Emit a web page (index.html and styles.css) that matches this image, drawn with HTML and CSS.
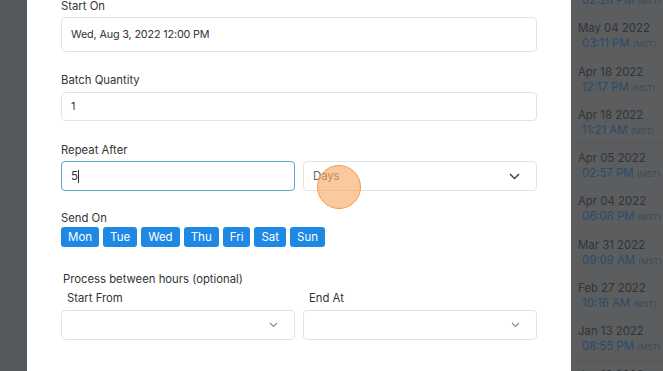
FILE: index.html
```html
<!DOCTYPE html>
<html lang="en">
  <head>
    <meta charset="UTF-8" />
    <meta name="viewport" content="width=device-width, initial-scale=1.0" />
    <link rel="stylesheet" href="styles.css">
  </head>
  <body>
    <div class="page">
      <div class="side-left"></div>

      <div class="modal">
        <label class="field-label first">Start On</label>
        <div class="input tall">Wed, Aug 3, 2022 12:00 PM</div>

        <label class="field-label batch">Batch Quantity</label>
        <div class="input short">1</div>

        <label class="field-label repeat">Repeat After</label>
        <div class="pair">
          <div class="input focused">5<span class="caret"></span></div>
          <div class="input select placeholder">
            Days
            <svg width="11" height="7" viewBox="0 0 11 7"><path d="M1 1l4.5 4.5L10 1" fill="none" stroke="#444" stroke-width="1.5"/></svg>
          </div>
        </div>

        <label class="field-label send">Send On</label>
        <div class="days">
          <span class="day">Mon</span>
          <span class="day">Tue</span>
          <span class="day">Wed</span>
          <span class="day">Thu</span>
          <span class="day">Fri</span>
          <span class="day">Sat</span>
          <span class="day">Sun</span>
        </div>

        <div class="hours-title">Process between hours (optional)</div>
        <div class="pair">
          <div>
            <div class="sub-label">Start From</div>
            <div class="input select">
              <span></span>
              <svg width="9" height="6" viewBox="0 0 9 6"><path d="M1 1l3.5 3.5L8 1" fill="none" stroke="#8a8a8a" stroke-width="1.2"/></svg>
            </div>
          </div>
          <div>
            <div class="sub-label">End At</div>
            <div class="input select">
              <span></span>
              <svg width="9" height="6" viewBox="0 0 9 6"><path d="M1 1l3.5 3.5L8 1" fill="none" stroke="#8a8a8a" stroke-width="1.2"/></svg>
            </div>
          </div>
        </div>

        <div class="click-dot"></div>
      </div>

      <div class="side-right">
        <div class="runs">
          <div class="run"><div class="run-date">May 11 2022</div><div class="run-time">02:28 PM <small>(MST)</small></div></div>
          <div class="run"><div class="run-date">May 04 2022</div><div class="run-time">03:11 PM <small>(MST)</small></div></div>
          <div class="run"><div class="run-date">Apr 18 2022</div><div class="run-time">12:17 PM <small>(MST)</small></div></div>
          <div class="run"><div class="run-date">Apr 18 2022</div><div class="run-time">11:21 AM <small>(MST)</small></div></div>
          <div class="run"><div class="run-date">Apr 05 2022</div><div class="run-time">02:57 PM <small>(MST)</small></div></div>
          <div class="run"><div class="run-date">Apr 04 2022</div><div class="run-time">06:08 PM <small>(MST)</small></div></div>
          <div class="run"><div class="run-date">Mar 31 2022</div><div class="run-time">09:09 AM <small>(MST)</small></div></div>
          <div class="run"><div class="run-date">Feb 27 2022</div><div class="run-time">10:16 AM <small>(MST)</small></div></div>
          <div class="run"><div class="run-date">Jan 13 2022</div><div class="run-time">08:55 PM <small>(MST)</small></div></div>
          <div class="run"><div class="run-date">Jan 12 2022</div><div class="run-time">04:40 PM <small>(MST)</small></div></div>
        </div>
      </div>
    </div>
  </body>
</html>
```

FILE: styles.css
```css
html, body {
  margin: 0;
  height: 100%;
  overflow: hidden;
}
body {
  font-family: Inter, "Noto Sans", sans-serif;
  color: #333;
}
.page {
  display: flex;
  height: 371px;
}
.side-left {
  width: 27px;
  background-color: #55595c;
}
.modal {
  position: relative;
  width: 476px;
  padding: 0 34px;
  background-color: #fff;
}
.field-label {
  display: block;
  font-size: 11.3px;
  line-height: 16px;
}
.field-label.first {
  line-height: 12px;
  margin: 0 0 5px;
}
.field-label.batch {
  margin: 20px 0 4px;
}
.field-label.repeat {
  margin: 21px 0 3px;
}
.field-label.send {
  margin: 19px 0 1px;
}
.input {
  box-sizing: border-box;
  height: 30px;
  padding: 0 9px;
  border: 1px solid #e3e3e3;
  border-radius: 4px;
  font-size: 10.8px;
  letter-spacing: -0.15px;
  display: flex;
  align-items: center;
}
.input.tall {
  height: 35px;
}
.input.short {
  height: 29px;
}
.input.focused {
  border: 1.5px solid #5aa5d8;
  font-size: 11.5px;
}
.caret {
  display: inline-block;
  width: 1px;
  height: 13px;
  background-color: #333;
}
.pair {
  display: grid;
  grid-template-columns: 1fr 1fr;
  gap: 8px;
}
.select {
  justify-content: space-between;
  padding-right: 16px;
}
.placeholder {
  color: #666;
  font-size: 11.5px;
}
.days {
  display: flex;
  gap: 4px;
}
.day {
  background-color: #1e88e5;
  color: #fff;
  font-size: 11.5px;
  line-height: 20px;
  padding: 0 7px;
  border-radius: 3px;
}
.hours-title {
  font-size: 11.3px;
  line-height: 16px;
  margin: 24px 0 3px 2px;
}
.sub-label {
  font-size: 11.3px;
  line-height: 16px;
  margin: 0 0 4px 6px;
}
.click-dot {
  position: absolute;
  left: 290px;
  top: 165px;
  width: 42px;
  height: 42px;
  border-radius: 50%;
  background-color: rgba(248, 165, 95, 0.6);
  border: 1.5px solid #f59a4f;
}
.side-right {
  flex: 1;
  background-color: #5b5d5f;
  overflow: hidden;
}
.runs {
  margin-top: -30px;
}
.run {
  box-sizing: border-box;
  height: 43.3px;
  padding: 6px 0 0 7px;
  border-top: 1px solid rgba(0, 0, 0, 0.05);
  white-space: nowrap;
}
.run-date {
  font-size: 11.4px;
  line-height: 16px;
  color: #323436;
}
.run-time {
  font-size: 11.4px;
  line-height: 14px;
  padding-left: 4px;
  color: #2c4b68;
}
.run-time small {
  font-size: 8px;
  color: #3c4a58;
}
```
